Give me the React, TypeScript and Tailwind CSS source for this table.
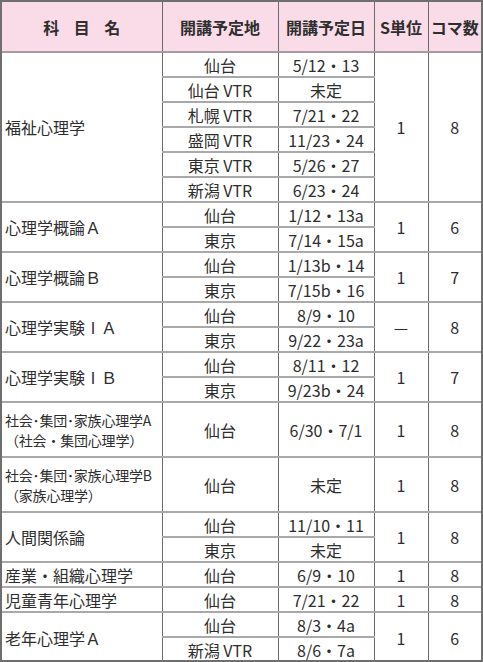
import React from "react";

type Sub = { venue: string; date: string };
type Group = { name: string[]; small?: boolean; tall?: boolean; s: string; koma: string; rows: Sub[] };

const groups: Group[] = [
  {
    name: ["福祉心理学"],
    s: "1",
    koma: "8",
    rows: [
      { venue: "仙台", date: "5/12・13" },
      { venue: "仙台 VTR", date: "未定" },
      { venue: "札幌 VTR", date: "7/21・22" },
      { venue: "盛岡 VTR", date: "11/23・24" },
      { venue: "東京 VTR", date: "5/26・27" },
      { venue: "新潟 VTR", date: "6/23・24" },
    ],
  },
  {
    name: ["心理学概論Ａ"],
    s: "1",
    koma: "6",
    rows: [
      { venue: "仙台", date: "1/12・13a" },
      { venue: "東京", date: "7/14・15a" },
    ],
  },
  {
    name: ["心理学概論Ｂ"],
    s: "1",
    koma: "7",
    rows: [
      { venue: "仙台", date: "1/13b・14" },
      { venue: "東京", date: "7/15b・16" },
    ],
  },
  {
    name: ["心理学実験ⅠＡ"],
    s: "—",
    koma: "8",
    rows: [
      { venue: "仙台", date: "8/9・10" },
      { venue: "東京", date: "9/22・23a" },
    ],
  },
  {
    name: ["心理学実験ⅠＢ"],
    s: "1",
    koma: "7",
    rows: [
      { venue: "仙台", date: "8/11・12" },
      { venue: "東京", date: "9/23b・24" },
    ],
  },
  {
    name: ["社会･集団･家族心理学A", "（社会・集団心理学）"],
    small: true,
    tall: true,
    s: "1",
    koma: "8",
    rows: [{ venue: "仙台", date: "6/30・7/1" }],
  },
  {
    name: ["社会･集団･家族心理学B", "（家族心理学）"],
    small: true,
    tall: true,
    s: "1",
    koma: "8",
    rows: [{ venue: "仙台", date: "未定" }],
  },
  {
    name: ["人間関係論"],
    s: "1",
    koma: "8",
    rows: [
      { venue: "仙台", date: "11/10・11" },
      { venue: "東京", date: "未定" },
    ],
  },
  { name: ["産業・組織心理学"], s: "1", koma: "8", rows: [{ venue: "仙台", date: "6/9・10" }] },
  { name: ["児童青年心理学"], s: "1", koma: "8", rows: [{ venue: "仙台", date: "7/21・22" }] },
  {
    name: ["老年心理学Ａ"],
    s: "1",
    koma: "6",
    rows: [
      { venue: "仙台", date: "8/3・4a" },
      { venue: "新潟 VTR", date: "8/6・7a" },
    ],
  },
];

const cell = "border-x border-[#6a6a6a] border-y-2 border-y-[#a9a9a9] p-0 align-middle";
const head = `${cell} border-b-[#a99aa1] font-bold`;

export default function App() {
  return (
    <div
      className="w-[483px] h-[662px] overflow-hidden bg-white border-2 border-[#6f6f6f] text-[#2e2e2e] text-[16px] leading-none"
      style={{ fontFamily: '"Noto Sans CJK JP", sans-serif' }}
    >
      <table className="w-[479px] border-collapse border-hidden table-fixed">
        <colgroup>
          <col className="w-[160px]" />
          <col className="w-[116px]" />
          <col className="w-[96px]" />
          <col className="w-[54px]" />
          <col className="w-[53px]" />
        </colgroup>
        <thead>
          <tr className="h-[50px] bg-[#fadbe8] text-[16px]">
            <th className={`${head} w-[160px]`}>
              <span className="tracking-[0.9em] pl-[0.9em]">科目名</span>
            </th>
            <th className={`${head} w-[116px]`}>開講予定地</th>
            <th className={`${head} w-[96px]`}>開講予定日</th>
            <th className={`${head} w-[54px] whitespace-nowrap`}>S単位</th>
            <th className={`${head} w-[53px] whitespace-nowrap`}>コマ数</th>
          </tr>
        </thead>
        <tbody>
          {groups.map((g) =>
            g.rows.map((r, i) => (
              <tr key={g.name[0] + i} className={g.tall ? "h-[55px]" : "h-[25px]"}>
                {i === 0 && (
                  <td rowSpan={g.rows.length} className={`${cell} pl-[3px] text-left`}>
                    {g.name.map((n) => (
                      <div
                        key={n}
                        className={
                          g.small
                            ? "text-[14px] leading-[20px] whitespace-nowrap tracking-[-0.2px]"
                            : "text-[16px] whitespace-nowrap"
                        }
                      >
                        {n}
                      </div>
                    ))}
                  </td>
                )}
                <td className={`${cell} text-center whitespace-nowrap`}>{r.venue}</td>
                <td className={`${cell} text-center whitespace-nowrap`}>{r.date}</td>
                {i === 0 && (
                  <>
                    <td rowSpan={g.rows.length} className={`${cell} text-center`}>
                      {g.s}
                    </td>
                    <td rowSpan={g.rows.length} className={`${cell} text-center`}>
                      {g.koma}
                    </td>
                  </>
                )}
              </tr>
            ))
          )}
        </tbody>
      </table>
    </div>
  );
}
